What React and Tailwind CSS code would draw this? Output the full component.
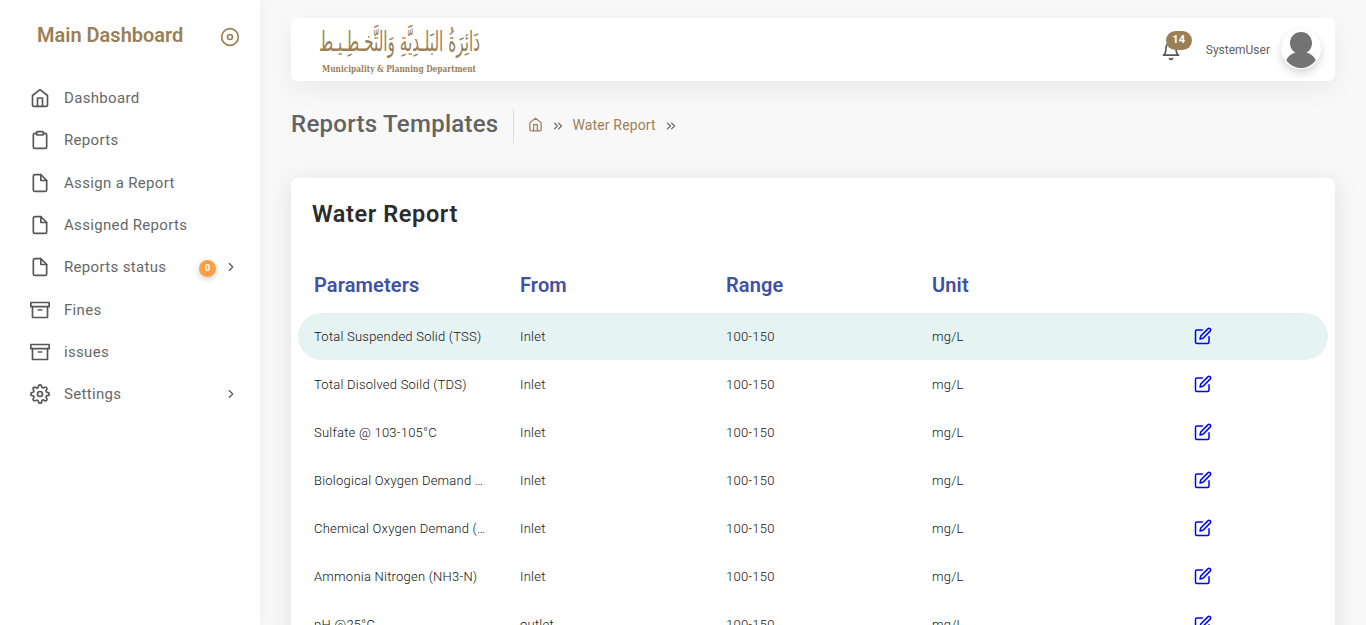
import { FiHome, FiClipboard, FiFile, FiArchive, FiSettings, FiDisc, FiBell, FiChevronRight, FiChevronsRight, FiEdit } from 'react-icons/fi';

const menu = [
  { label: 'Dashboard', Icon: FiHome },
  { label: 'Reports', Icon: FiClipboard },
  { label: 'Assign a Report', Icon: FiFile },
  { label: 'Assigned Reports', Icon: FiFile },
  { label: 'Reports status', Icon: FiFile, badge: '0', arrow: true },
  { label: 'Fines', Icon: FiArchive },
  { label: 'issues', Icon: FiArchive },
  { label: 'Settings', Icon: FiSettings, arrow: true },
];

const rows = [
  ['Total Suspended Solid (TSS)', 'Inlet'],
  ['Total Disolved Soild (TDS)', 'Inlet'],
  ['Sulfate @ 103-105°C', 'Inlet'],
  ['Biological Oxygen Demand (BOD)', 'Inlet'],
  ['Chemical Oxygen Demand (COD)', 'Inlet'],
  ['Ammonia Nitrogen (NH3-N)', 'Inlet'],
  ['pH @25°C', 'outlet'],
];

function Sidebar() {
  return (
    <aside className="h-full w-[260px] shrink-0 bg-white shadow-[0_0_15px_0_rgba(34,41,47,0.05)]">
      <div className="flex h-[77px] items-start justify-between pl-[37px] pr-5 pt-[21px]">
        <h2 className="text-[20px] font-semibold leading-7 text-[#9b8057]">Main Dashboard</h2>
        <FiDisc className="mt-[6px] size-5 text-[#9b8057]" />
      </div>
      <nav>
        {menu.map(({ label, Icon, badge, arrow }) => (
          <a key={label} className="flex h-[42.3px] items-center pl-[30px] pr-[22px] text-[#565656]">
            <Icon className="size-5 shrink-0" />
            <span className="ml-[14px] flex-1 whitespace-nowrap pt-[0.4px] text-[15px] tracking-[0.33px] text-[#686868]">{label}</span>
            {badge && (
              <span className="mr-2 mt-[3px] flex size-[17px] items-center justify-center rounded-full bg-[#ff9f43] text-[9px] font-bold text-white shadow-[0_2px_6px_rgba(0,0,0,0.2)]">
                {badge}
              </span>
            )}
            {arrow && <FiChevronRight className="size-[14px]" />}
          </a>
        ))}
      </nav>
    </aside>
  );
}

function Logo() {
  return (
    <svg width="164" height="62" viewBox="0 0 164 62" fill="#9b8057" className="shrink-0">
      <g transform="translate(1 31.500) scale(1 1.75)">
        <text x="0" y="0" direction="ltr" fontFamily="'DejaVu Sans', sans-serif" fontSize="16" textLength="161" lengthAdjust="spacingAndGlyphs">
          دَائِرَةُ البَلـدِيَّةِ وَالتَّخـطِـيـط
        </text>
      </g>
      <text x="4" y="53" fontFamily="'DejaVu Serif', serif" fontWeight="700" fontSize="9.600" textLength="154" lengthAdjust="spacingAndGlyphs">
        Municipality &amp; Planning Department
      </text>
    </svg>
  );
}

function Header() {
  return (
    <header className="flex h-[63px] shrink-0 items-center justify-between rounded-md bg-white pl-[27px] pr-[14px] shadow-[0_8px_25px_0_rgba(0,0,0,0.06)]">
      <Logo />
      <div className="flex items-center">
        <div className="relative mt-[3px] size-5 text-[#565656]">
          <FiBell className="size-5" />
          <span className="absolute -top-[10px] left-[5px] flex h-[19px] w-[26px] items-center justify-center rounded-full bg-[#9b8057] text-[11px] font-bold tracking-[0.3px] text-white">14</span>
        </div>
        <span className="ml-[25px] text-[12px] text-[#626262]">SystemUser</span>
        <div className="ml-[11px] -mt-[2px] size-10 overflow-hidden rounded-full bg-white shadow-[0_4px_8px_0_rgba(0,0,0,0.16)]">
          <svg viewBox="0 0 40 40" className="size-10" fill="#737373">
            <path d="M20 3c6.200 0 11 4.800 11 11 0 4.200-2.200 7.800-5.400 9.600 4.500 1.600 7.500 4 9.100 7.600C31.200 36 26 39 20 39S8.800 36 5.300 31.200c1.600-3.600 4.600-6 9.100-7.600C11.200 21.800 9 18.200 9 14c0-6.200 4.800-11 11-11Z" />
          </svg>
        </div>
      </div>
    </header>
  );
}

export default function App() {
  return (
    <div className="flex h-[625px] w-[1366px] overflow-hidden bg-[#f8f8f8] font-['Roboto',sans-serif]">
      <Sidebar />
      <main className="flex min-w-0 flex-1 flex-col px-[31px] pt-[18px]">
        <Header />
        <div className="mt-7 flex h-[34px] shrink-0 items-center">
          <h1 className="-mt-[5px] text-[24px] font-medium leading-7 tracking-[0.27px] text-[#636363]">Reports Templates</h1>
          <div className="ml-[14px] flex h-[34px] items-center border-l border-[#d6dce1] pl-[14px] text-[#626262]">
            <FiHome className="-mt-[3px] size-[15px] text-[#9b8057]" />
            <FiChevronsRight className="ml-2 size-[14px]" />
            <span className="-mt-[2px] ml-2 text-[14px] tracking-[0.14px] text-[#9b8057]">Water Report</span>
            <FiChevronsRight className="ml-2 size-[14px]" />
          </div>
        </div>
        <section className="mt-[35px] h-[600px] shrink-0 rounded-md bg-white px-[7px] shadow-[0_4px_25px_0_rgba(0,0,0,0.1)]">
          <h2 className="pl-[14px] pt-[22px] text-[23.5px] font-semibold leading-7 tracking-[0.6px] text-[#2c2c2c]">Water Report</h2>
          <div className="mt-[42px] grid h-[28px] grid-cols-5 items-center text-[20px] font-semibold tracking-[0.13px] text-[#3f51a5]">
            <span className="pl-4">Parameters</span>
            <span className="pl-4">From</span>
            <span className="pl-4">Range</span>
            <span className="pl-4">Unit</span>
          </div>
          <div className="mt-[15px] flex flex-col gap-px">
            {rows.map(([name, from], i) => (
              <div key={name} className={`grid h-[47px] grid-cols-5 items-center rounded-full text-[13px] font-light tracking-[0.23px] text-[#111111] ${i === 0 ? 'bg-[#e5f3f3]' : ''}`}>
                <span className="truncate pl-4 pr-[18px]">{name}</span>
                <span className="pl-4">{from}</span>
                <span className="pl-4">100-150</span>
                <span className="pl-4">mg/L</span>
                <span className="flex justify-center pb-[1px] pr-[44px]">
                  <FiEdit className="size-[18px] text-[#0000ff]" />
                </span>
              </div>
            ))}
          </div>
        </section>
      </main>
    </div>
  );
}
